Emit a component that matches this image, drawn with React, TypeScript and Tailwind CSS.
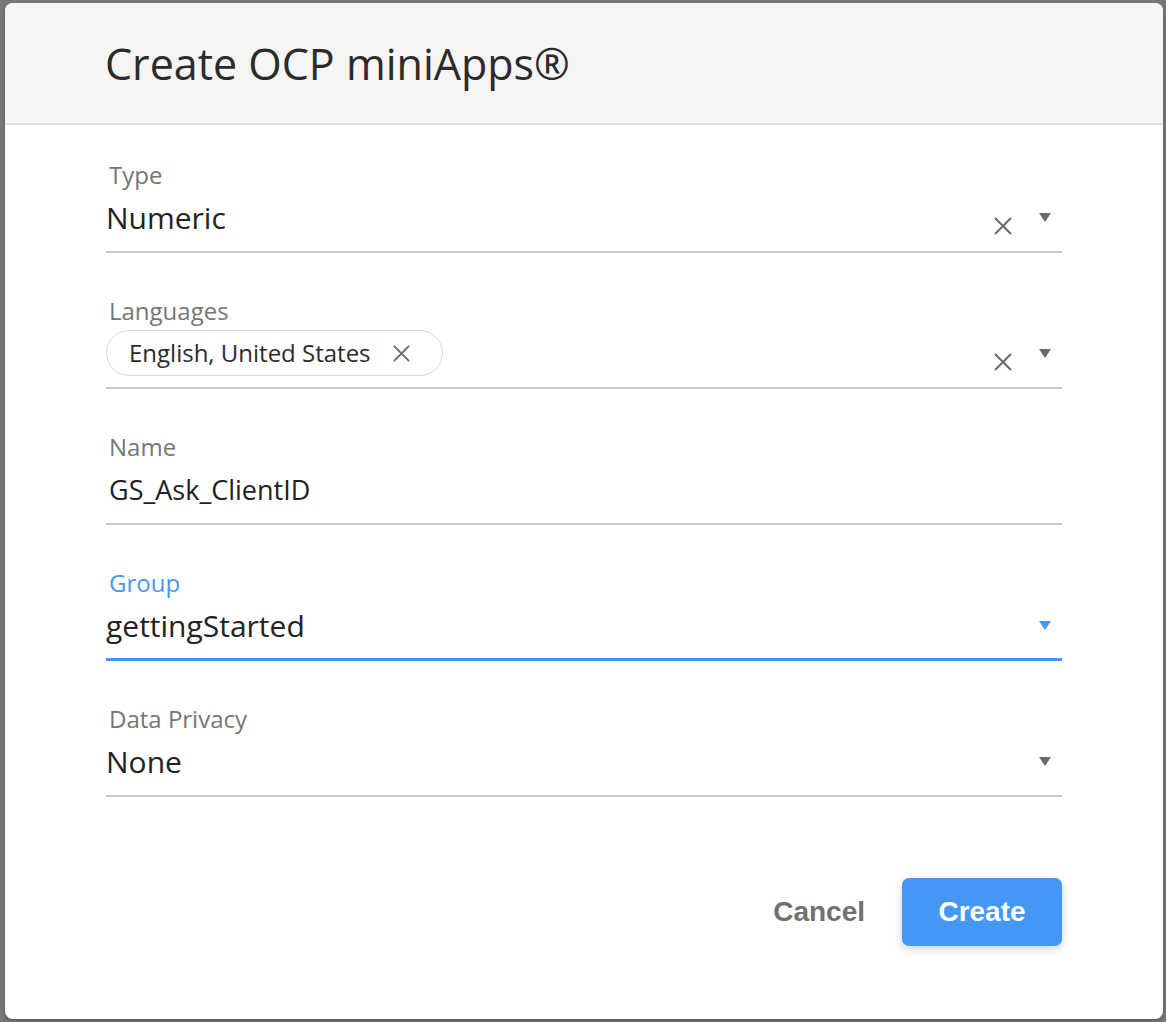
import type { FC, ReactNode } from "react";

const ClearIcon: FC<{ size?: number }> = ({ size = 20 }) => (
  <svg width={size} height={size} viewBox="0 0 20 20" fill="none">
    <path d="M2 2L18 18M18 2L2 18" stroke="#6b6b6b" strokeWidth="2" />
  </svg>
);

const Caret: FC<{ color?: string }> = ({ color = "#6b6b6b" }) => (
  <svg width="12" height="9" viewBox="0 0 12 9">
    <polygon points="0,0 12,0 6,9" fill={color} />
  </svg>
);

interface FieldProps {
  label: string;
  focused?: boolean;
  clearable?: boolean;
  select?: boolean;
  className?: string;
  children: ReactNode;
}

const Field: FC<FieldProps> = ({ label, focused, clearable, select, className, children }) => {
  return (
    <div className={`flex flex-col ${className ?? ""}`}>
      <div
        className={`h-[28px] pl-[3px] text-[24px] leading-[28px] ${
          focused ? "text-[#4a96ef]" : "text-[#767676]"
        }`}
      >
        {label}
      </div>
      <div
        className={`flex h-[64px] ${
          focused ? "border-b-[3px] border-[#4597f3]" : "border-b-2 border-[#c9c9c9]"
        }`}
      >
        <div className="flex flex-1 items-center pb-[4px]">{children}</div>
        {/* Clear and dropdown icons */}
        <div className="flex items-start gap-[26px] pr-[11px]">
          {clearable && (
            <div className="mt-[27px]">
              <ClearIcon />
            </div>
          )}
          {select && (
            <div className="mt-[24px]">
              <Caret color={focused ? "#4597f3" : "#6b6b6b"} />
            </div>
          )}
        </div>
      </div>
    </div>
  );
};

export default function App() {
  return (
    <div
      className="h-[1022px] w-[1166px] overflow-hidden bg-[#787878] pl-[5px] pt-[3px]"
      style={{ fontFamily: '"Open Sans", "Noto Sans", sans-serif' }}
    >
      <div className="flex h-[1016px] w-[1158px] flex-col overflow-hidden rounded-[8px] bg-white shadow-[0_2px_4px_rgba(0,0,0,0.25)]">
        {/* Header */}
        <div className="h-[122px] border-b-2 border-[#e2e2e2] bg-[#f5f5f5] pl-[100px] pt-[35px]">
          <h1 className="text-[43px] leading-[52px] font-normal text-[#2b2b2b]">Create OCP miniApps®</h1>
        </div>

        {/* Form */}
        <div className="flex flex-col px-[101px] pt-[36px]">
          <Field label="Type" clearable select>
            <span className="text-[30px] leading-[36px] text-[#222]">Numeric</span>
          </Field>

          <Field label="Languages" clearable select className="mt-[44px]">
            <div className="-mt-[2px] flex h-[46px] items-center gap-[21px] rounded-full border border-[#d6d6d6] pl-[22px] pr-[31px]">
              <span className="text-[24px] leading-[28px] text-[#2b2b2b]">English, United States</span>
              <ClearIcon size={19} />
            </div>
          </Field>

          <Field label="Name" className="mt-[44px]">
            <span className="pl-[3px] text-[27px] leading-[36px] text-[#222]">GS_Ask_ClientID</span>
          </Field>

          <Field label="Group" focused select className="mt-[44px]">
            <span className="text-[30px] leading-[36px] text-[#222]">gettingStarted</span>
          </Field>

          <Field label="Data Privacy" select className="mt-[44px]">
            <span className="text-[30px] leading-[36px] text-[#222]">None</span>
          </Field>

          {/* Actions */}
          <div
            className="mt-[81px] flex items-center justify-end gap-[37px]"
            style={{ fontFamily: '"Liberation Sans", Arial, sans-serif' }}
          >
            <button className="text-[28px] font-bold text-[#717171]">Cancel</button>
            <button className="h-[68px] w-[160px] rounded-[7px] bg-[#4597f5] text-[28px] font-bold text-white shadow-[0_3px_8px_rgba(0,0,0,0.18)]">
              Create
            </button>
          </div>
        </div>
      </div>
    </div>
  );
}
